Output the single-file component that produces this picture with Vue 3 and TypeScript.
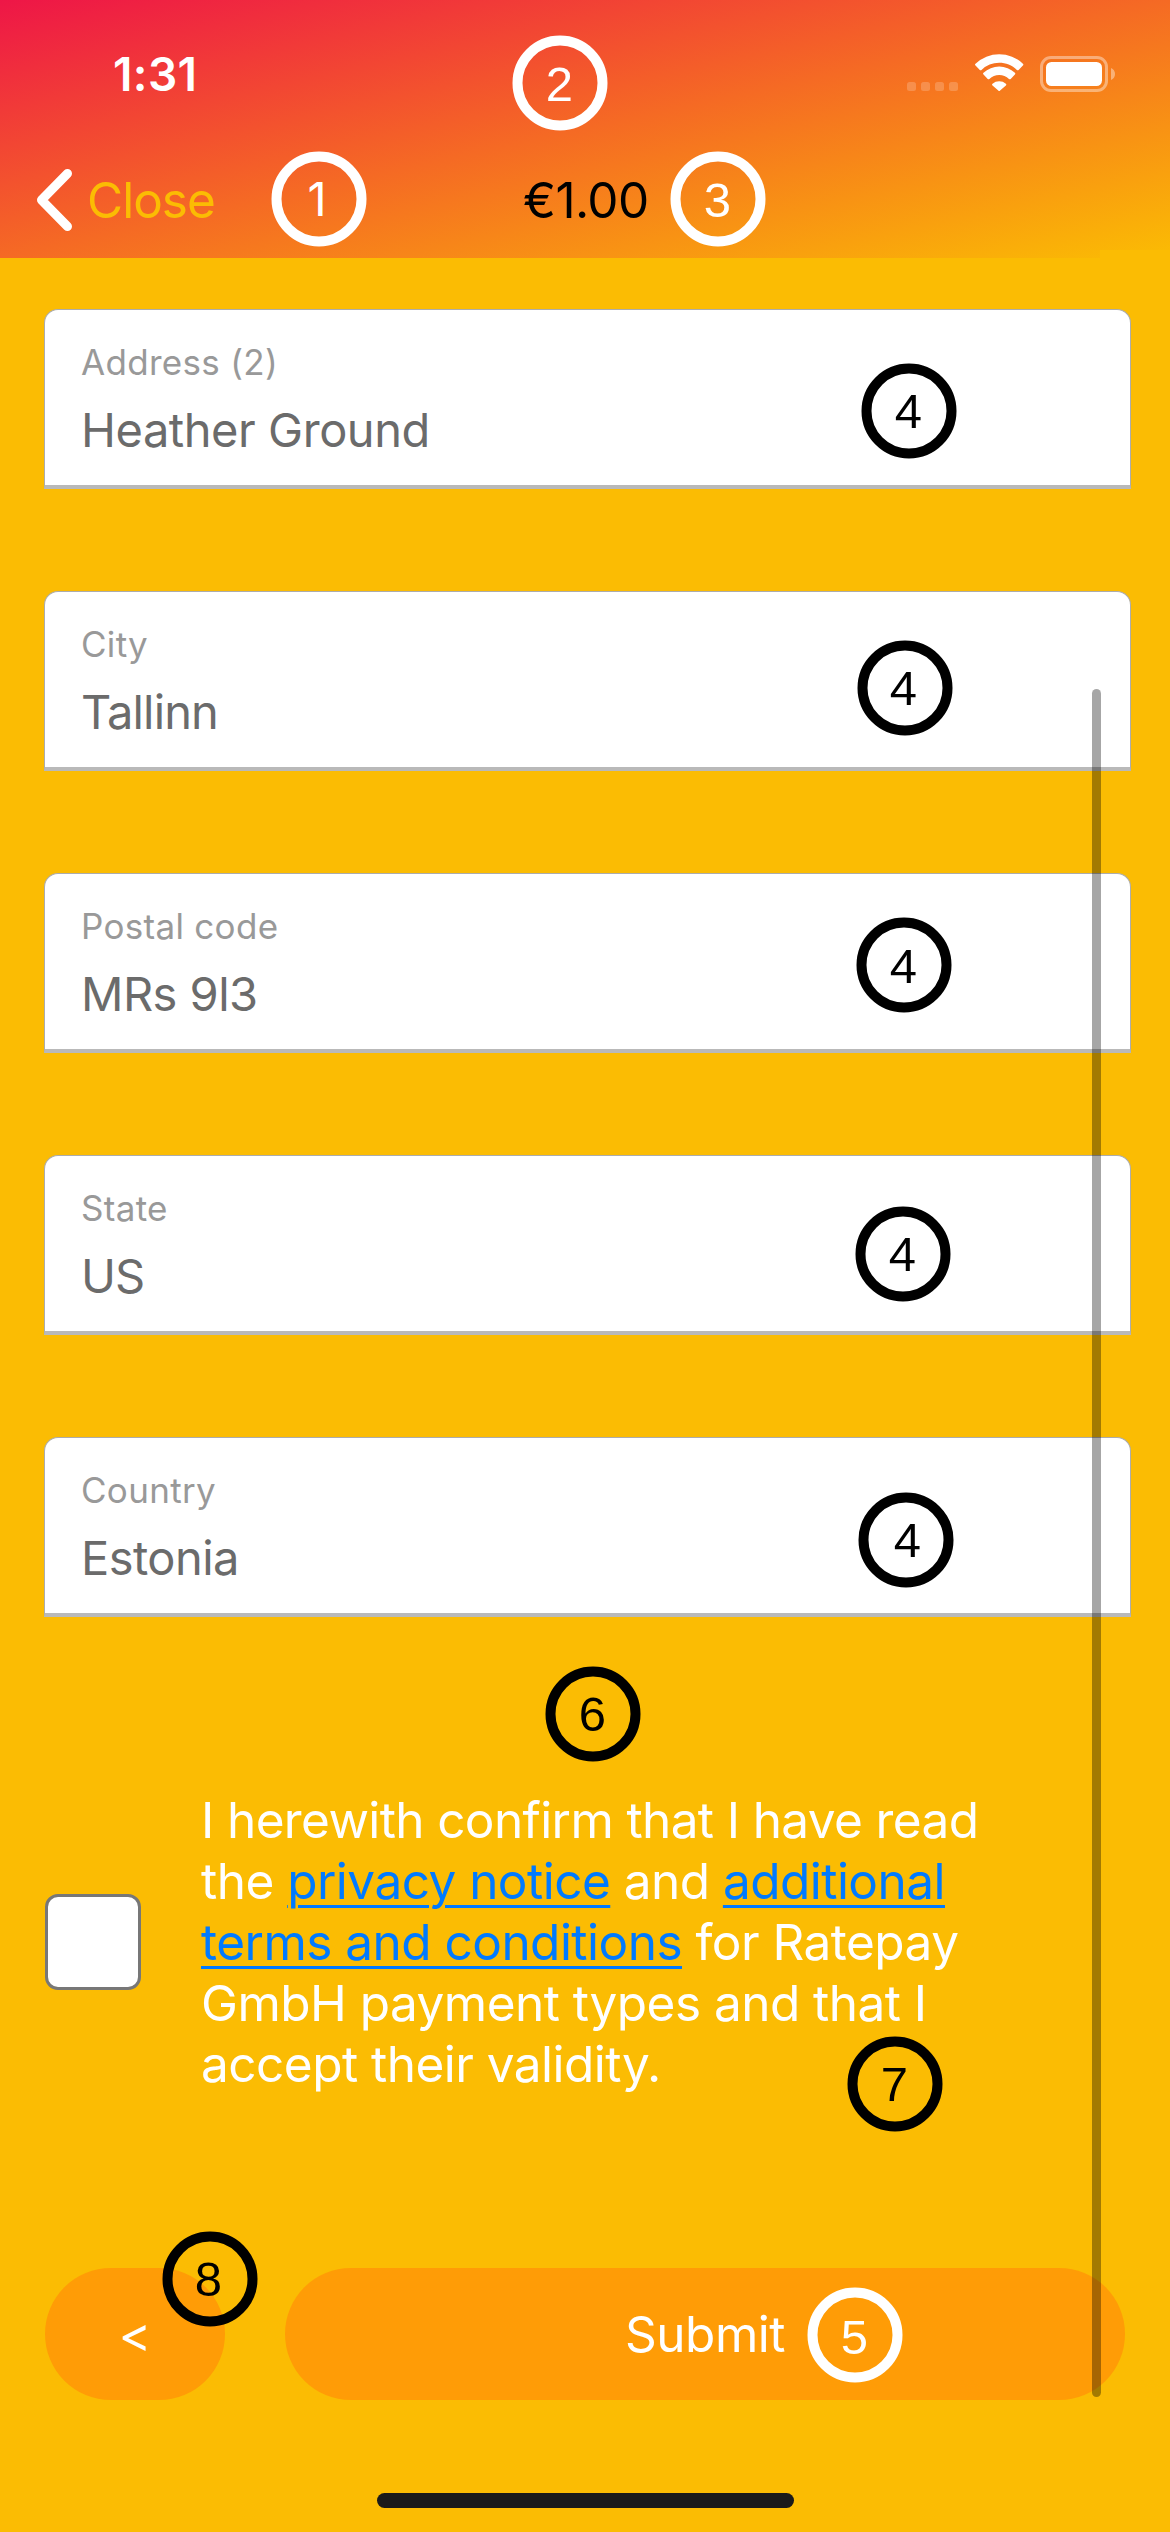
<script setup lang="ts">
interface Field { label: string; value: string; tracking: number }
interface Marker { n: number; x: number; y: number; light?: boolean; dx?: number; dy?: number }

const fields: Field[] = [
  { label: 'Address (2)', value: 'Heather Ground', tracking: -0.45 },
  { label: 'City', value: 'Tallinn', tracking: -0.85 },
  { label: 'Postal code', value: 'MRs 9l3', tracking: -0.55 },
  { label: 'State', value: 'US', tracking: -0.85 },
  { label: 'Country', value: 'Estonia', tracking: -0.55 },
]

// Annotation pins, given by their centre; dx/dy nudge the digit inside its ring
const markers: Marker[] = [
  { n: 1, x: 319, y: 199, light: true, dx: -2 },
  { n: 2, x: 559.5, y: 82.5, light: true, dy: 1 },
  { n: 3, x: 717.5, y: 199, light: true, dy: 1 },
  { n: 4, x: 908.5, y: 410.5 },
  { n: 4, x: 904.5, y: 687.5, dx: -1 },
  { n: 4, x: 903.5, y: 964.5, dy: 1 },
  { n: 4, x: 902.5, y: 1253.5 },
  { n: 4, x: 905.5, y: 1539.5, dx: 2 },
  { n: 6, x: 592.5, y: 1713.5 },
  { n: 7, x: 894.5, y: 2083.5 },
  { n: 8, x: 209.5, y: 2278.5, dx: -1 },
  { n: 5, x: 854.5, y: 2334.5, light: true, dy: 2 },
]
</script>

<template>
  <div class="screen">
    <header class="header">
      <div class="status">
        <span class="time">1:31</span>
        <svg class="indicators" width="210" height="40" viewBox="906 54 210 40">
          <g fill="#fff" fill-opacity=".2">
            <rect x="907" y="82" width="9" height="9" rx="2.5" />
            <rect x="921" y="82" width="9" height="9" rx="2.5" />
            <rect x="935" y="82" width="9" height="9" rx="2.5" />
            <rect x="949" y="82" width="9" height="9" rx="2.5" />
          </g>
          <g fill="#fff">
            <path d="M999.2 62.8c6.600 0 12.900 2.500 17.700 7.100a1.200 1.200 0 0 0 1.700 0l4.300-4.400a1.200 1.200 0 0 0 0-1.800 34.300 34.300 0 0 0-47.400 0 1.200 1.200 0 0 0 0 1.800l4.300 4.400a1.200 1.200 0 0 0 1.700 0 25.600 25.600 0 0 1 17.700-7.100z" />
            <path d="M999.2 75.100c3.700 0 7.100 1.300 9.800 3.800a1.200 1.200 0 0 0 1.700 0l4.200-4.300a1.200 1.200 0 0 0 0-1.800 22.800 22.800 0 0 0-31.400 0 1.200 1.200 0 0 0 0 1.800l4.200 4.300a1.200 1.200 0 0 0 1.700 0 14.400 14.400 0 0 1 9.800-3.800z" />
            <path d="M1005.900 83.800a1.200 1.200 0 0 1 0 1.800l-5.800 5a1.200 1.200 0 0 1-1.800 0l-5.800-5a1.200 1.200 0 0 1 0-1.800 10.300 10.300 0 0 1 13.400 0z" />
            <rect x="1046" y="62" width="56" height="24" rx="5.500" />
            <path fill-opacity=".4" d="M1111 68v12c2.500-1 4-3.300 4-6s-1.500-5-4-6z" />
          </g>
          <rect x="1041.500" y="57.500" width="65" height="33" rx="9.500" fill="none" stroke="#fff" stroke-opacity=".4" stroke-width="3" />
        </svg>
      </div>
      <nav class="nav">
        <svg class="chevron" width="38" height="64" viewBox="0 0 38 64">
          <path d="M32.500 5.500 6.500 32l26 26.500" fill="none" stroke="#fff" stroke-width="9" stroke-linecap="round" stroke-linejoin="round" />
        </svg>
        <span class="close">Close</span>
        <span class="amount">€1.00</span>
      </nav>
    </header>

    <main class="form">
      <div v-for="f in fields" :key="f.label" class="field">
        <span class="label">{{ f.label }}</span>
        <span class="value" :style="{ letterSpacing: f.tracking + 'px' }">{{ f.value }}</span>
      </div>

      <div class="consent">
        <span class="checkbox"></span>
        <p class="terms">
          <span class="line l1">I herewith confirm that I have read</span>
          <span class="line">the <a>privacy notice</a> and <a>additional</a></span>
          <span class="line"><a>terms and conditions</a> for Ratepay</span>
          <span class="line">GmbH payment types and that I</span>
          <span class="line">accept their validity.</span>
        </p>
      </div>

      <div class="actions">
        <button class="btn back" type="button">&lt;</button>
        <button class="btn submit" type="button">Submit</button>
      </div>
    </main>

    <div class="home"></div>
    <div class="scrollbar"></div>
    <div
      v-for="(m, i) in markers"
      :key="i"
      class="marker"
      :class="{ light: m.light, one: m.n === 1 }"
      :style="{ left: m.x + 'px', top: m.y + 'px' }"
    >
      <span class="digit" :style="{ transform: `translate(${m.dx ?? 0}px, ${m.dy ?? 0}px)` }">{{ m.n }}</span>
    </div>
  </div>
</template>

<style>
body { margin: 0; background: #fbbc03; }
</style>

<style scoped>
.screen {
  position: relative;
  box-sizing: border-box;
  width: 1170px;
  height: 2532px;
  overflow: hidden;
  background: #fbbc03;
  font-family: Inter, "Liberation Sans", sans-serif;
  display: flex;
  flex-direction: column;
}
.header {
  position: relative;
  box-sizing: border-box;
  flex: none;
  height: 258px;
  background: linear-gradient(to bottom right, #ee1647, #f56a24 50%, #fbbc03);
}
.header::after {
  content: "";
  position: absolute;
  right: 0;
  bottom: 0;
  width: 70px;
  height: 8px;
  background: #fbbc03;
}
.status {
  display: flex;
  justify-content: space-between;
  align-items: center;
  height: 148px;
  padding: 0 54px 0 113px;
}
.time { color: #fff; font-size: 46px; font-weight: 600; line-height: 56px; letter-spacing: .4px; }
.nav {
  display: flex;
  align-items: center;
  height: 104px;
  padding-left: 35px;
}
.chevron { flex: none; }
.close, .amount { font-size: 49.500px; line-height: 60px; }
.close { color: #fbbc03; margin-left: 14px; width: 436px; letter-spacing: -1px; }
.amount { color: #000; letter-spacing: -.6px; }
.form { padding: 51px 39px 0 44px; }
.field {
  box-sizing: border-box;
  height: 180px;
  margin-bottom: 102px;
  padding: 30px 36px 0;
  background: #fff;
  border: 1px solid #acacac;
  border-bottom: 4px solid #b9b9b9;
  border-radius: 14px 14px 0 0;
}
.label, .value { display: block; white-space: nowrap; }
.label { font-size: 35px; line-height: 44px; color: #999; letter-spacing: .3px; }
.value { font-size: 47px; line-height: 60px; margin-top: 16px; color: #6b6b6b; }
.consent {
  display: flex;
  align-items: center;
  height: 305px;
  margin-top: 173px;
}
.checkbox {
  box-sizing: border-box;
  flex: none;
  width: 96px;
  height: 96px;
  margin: -1px 60px 0 1px;
  border: 3px solid #777;
  border-radius: 13px;
  background: #fff;
}
.terms { margin: 0; color: #fff; font-size: 49.500px; line-height: 61px; }
.line { display: block; white-space: nowrap; letter-spacing: -.52px; }
.line.l1 { letter-spacing: -.62px; }
.terms a {
  color: #007aff;
  text-decoration: underline;
  text-decoration-thickness: 3px;
  text-underline-offset: 6px;
}
.actions { display: flex; gap: 60px; margin: 173px 0 0 1px; }
.btn {
  height: 132px;
  padding: 0;
  border: 0;
  border-radius: 66px;
  background: #ff9c06;
  color: #fff;
  font: 400 49.500px/60px Inter, "Liberation Sans", sans-serif;
}
.back { width: 180px; }
.submit { width: 840px; letter-spacing: -.5px; }
.home {
  flex: none;
  width: 417px;
  height: 15px;
  margin: 93px 0 0 377px;
  border-radius: 8px;
  background: #1a1a1a;
}
.scrollbar {
  position: absolute;
  left: 1092px;
  top: 689px;
  width: 9px;
  height: 1708px;
  border-radius: 5px;
  background: rgba(0, 0, 0, .35);
}
.marker {
  position: absolute;
  box-sizing: border-box;
  width: 95px;
  height: 95px;
  border: 10.500px solid #000;
  border-radius: 50%;
  transform: translate(-50%, -50%);
  color: #000;
  font: 49px/74px "Liberation Sans", Arial, sans-serif;
  text-align: center;
}
.digit { display: block; }
.marker.light { color: #fff; border-color: #fff; }
.marker.one { font-family: Inter, sans-serif; font-size: 47px; }
</style>
